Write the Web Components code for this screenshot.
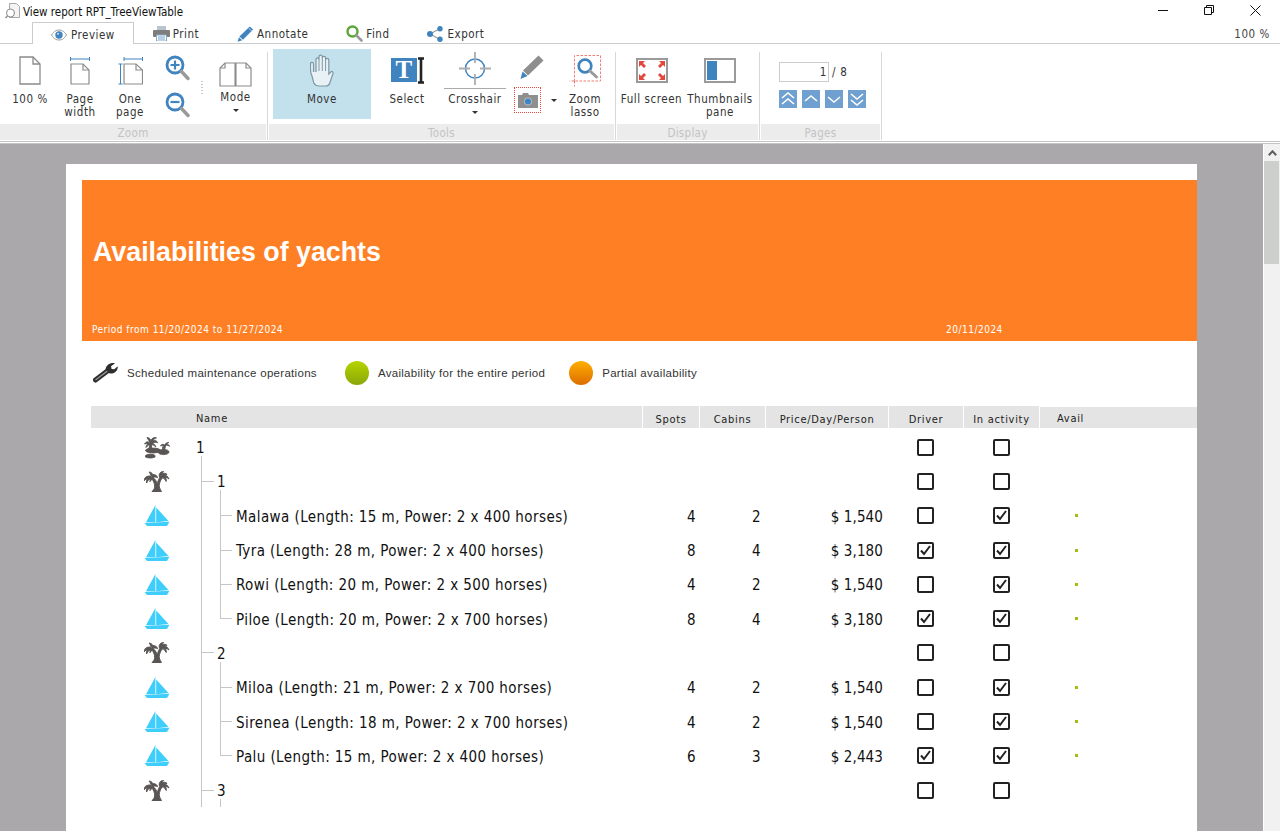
<!DOCTYPE html>
<html lang="en">
<head>
<meta charset="utf-8">
<title>View report RPT_TreeViewTable</title>
<style>
  html, body { margin: 0; height: 100%; overflow: hidden; background: #fff; }
  body { font-family: "DejaVu Sans Condensed", "DejaVu Sans", sans-serif; font-size: 11.5px; color: #333; }
  viewer-app { --ui-font: "DejaVu Sans Condensed", "DejaVu Sans", sans-serif; }
</style>
</head>
<body>
<viewer-app>
  <title-bar slot="title" caption="View report RPT_TreeViewTable"></title-bar>
  <ribbon-tabs slot="tabs"></ribbon-tabs>
  <ribbon-bar slot="ribbon">
    <ribbon-group label="Zoom" width="267" pad="5">
      <ribbon-button icon="page" width="50">100 %</ribbon-button>
      <ribbon-button icon="pageWidth" width="50">Page<br>width</ribbon-button>
      <ribbon-button icon="onePage" width="50">One<br>page</ribbon-button>
      <icon-stack width="44" gap="11" top="6"><svg-icon name="zoomIn"></svg-icon><svg-icon name="zoomOut"></svg-icon></icon-stack>
      <dot-grip></dot-grip>
      <ribbon-button icon="book" width="61" arrow tight>Mode</ribbon-button>
    </ribbon-group>
    <ribbon-group label="Tools" width="346" pad="4">
      <ribbon-button icon="hand" width="98" active>Move</ribbon-button>
      <ribbon-button icon="select" width="72">Select</ribbon-button>
      <ribbon-button icon="crosshair" width="64" arrow rule>Crosshair</ribbon-button>
      <capture-tools></capture-tools>
      <ribbon-button icon="lasso" width="56">Zoom<br>lasso</ribbon-button>
    </ribbon-group>
    <ribbon-group label="Display" width="142" pad="0">
      <ribbon-button icon="fullscreen" width="69">Full screen</ribbon-button>
      <ribbon-button icon="thumbs" width="68">Thumbnails<br>pane</ribbon-button>
    </ribbon-group>
    <ribbon-group label="Pages" width="120" pad="18">
      <page-nav page="1" total="8"></page-nav>
    </ribbon-group>
  </ribbon-bar>
  <report-viewport slot="view">
    <report-page>
      <report-band title="Availabilities of yachts" period="Period from 11/20/2024 to 11/27/2024" date="20/11/2024"></report-band>
      <report-legend></report-legend>
      <tree-table>
        <tree-row level="0" icon="islands" name="1" driver="0" active="0" trunk="below"></tree-row>
        <tree-row level="1" icon="palm" name="1" driver="0" active="0" trunk="full" branch="below"></tree-row>
        <tree-row level="2" icon="boat" name="Malawa (Length: 15 m, Power: 2 x 400 horses)" spots="4" cabins="2" price="$ 1,540" driver="0" active="1" avail trunk="full" branch="full"></tree-row>
        <tree-row level="2" icon="boat" name="Tyra (Length: 28 m, Power: 2 x 400 horses)" spots="8" cabins="4" price="$ 3,180" driver="1" active="1" avail trunk="full" branch="full"></tree-row>
        <tree-row level="2" icon="boat" name="Rowi (Length: 20 m, Power: 2 x 500 horses)" spots="4" cabins="2" price="$ 1,540" driver="0" active="1" avail trunk="full" branch="full"></tree-row>
        <tree-row level="2" icon="boat" name="Piloe (Length: 20 m, Power: 2 x 700 horses)" spots="8" cabins="4" price="$ 3,180" driver="1" active="1" avail trunk="full" branch="end"></tree-row>
        <tree-row level="1" icon="palm" name="2" driver="0" active="0" trunk="full" branch="below"></tree-row>
        <tree-row level="2" icon="boat" name="Miloa (Length: 21 m, Power: 2 x 700 horses)" spots="4" cabins="2" price="$ 1,540" driver="0" active="1" avail trunk="full" branch="full"></tree-row>
        <tree-row level="2" icon="boat" name="Sirenea (Length: 18 m, Power: 2 x 700 horses)" spots="4" cabins="2" price="$ 1,540" driver="0" active="1" avail trunk="full" branch="full"></tree-row>
        <tree-row level="2" icon="boat" name="Palu (Length: 15 m, Power: 2 x 400 horses)" spots="6" cabins="3" price="$ 2,443" driver="1" active="1" avail trunk="full" branch="end"></tree-row>
        <tree-row level="1" icon="palm" name="3" driver="0" active="0" trunk="full" branch="below"></tree-row>
      </tree-table>
    </report-page>
  </report-viewport>
</viewer-app>

<script>
const ICONS = {
  doc: `<svg width="16" height="16" viewBox="0 0 16 16"><path d="M4.500.5h7l3 3v11h-10z" fill="#f4f4f4" stroke="#a8a8a8"/><circle cx="5.500" cy="10" r="4" fill="#fff" stroke="#8a8a8a"/><path d="M2.500 13l-2 2" stroke="#8a8a8a" stroke-width="1.500"/></svg>`,
  eye: `<svg width="16" height="12" viewBox="0 0 16 12"><path d="M.5 6C3 2 5.500 1 8 1s5 1 7.500 5c-2.500 4-5 5-7.500 5S3 10 .5 6z" fill="#fff" stroke="#9a9a9a"/><circle cx="8" cy="6" r="3.700" fill="#3f83bf"/><circle cx="7" cy="4.800" r="1" fill="#cfe2f2"/></svg>`,
  print: `<svg width="17" height="15" viewBox="0 0 17 15"><path d="M4 0h9v4H4z" fill="#b9c4cd"/><rect x="0" y="4" width="17" height="7" rx="1" fill="#7d7d7d"/><path d="M3.500 9h10v6h-10z" fill="#fff" stroke="#8aa9c5"/><path d="M5 11h7M5 13h7" stroke="#6fa0cf"/></svg>`,
  pen: `<svg width="17" height="16" viewBox="0 0 17 16"><path d="M12.800.6l3.300 3L6 13.700l-3.600-3.200z" fill="#3f83bf"/><path d="M2 11.200l3.200 3-4.700 1.500z" fill="#3f83bf"/><path d="M11.500 2l3.300 3" stroke="#a9cbe6"/></svg>`,
  find: `<svg width="17" height="17" viewBox="0 0 17 17"><circle cx="6.500" cy="6.500" r="5" fill="#fff" stroke="#5ea63a" stroke-width="2.400"/><path d="M10.500 10.500l5 5" stroke="#9a9a9a" stroke-width="2.600" stroke-linecap="round"/></svg>`,
  share: `<svg width="16" height="16" viewBox="0 0 16 16"><path d="M3 8l10-5.500M3 8l10 5.500" stroke="#9c9c9c" stroke-width="1.200"/><circle cx="3" cy="8" r="3" fill="#3f83bf"/><circle cx="13" cy="2.800" r="2.700" fill="#3f83bf"/><circle cx="13" cy="13.200" r="2.700" fill="#3f83bf"/></svg>`,
  page: `<svg width="22" height="29" viewBox="0 0 22 29"><path d="M1 1h13l7 7v20H1z" fill="#fff" stroke="#8b8b8b" stroke-width="1.300"/><path d="M14 1v7h7" fill="none" stroke="#8b8b8b" stroke-width="1.300"/></svg>`,
  pageWidth: `<svg width="20" height="29" viewBox="0 0 20 29"><path d="M.5 1v4M19.500 1v4M.5 3h19" stroke="#3f83bf" fill="none"/><path d="M1 8h12l6 6v14H1z" fill="#fff" stroke="#8b8b8b" stroke-width="1.200"/><path d="M13 8v6h6" fill="none" stroke="#8b8b8b" stroke-width="1.200"/></svg>`,
  onePage: `<svg width="25" height="29" viewBox="0 0 25 29"><path d="M6 1v4M24.500 1v4M6 3h18.500M.5 8h4M.5 28h4M2.500 8v20" stroke="#3f83bf" fill="none"/><path d="M6 8h12l6.500 6v14H6z" fill="#fff" stroke="#8b8b8b" stroke-width="1.200"/><path d="M18 8v6h6.500" fill="none" stroke="#8b8b8b" stroke-width="1.200"/></svg>`,
  zoomIn: `<svg width="25" height="26" viewBox="0 0 25 26"><circle cx="10" cy="10" r="8" fill="#fff" stroke="#3f83bf" stroke-width="2.800"/><path d="M5.500 10h9M10 5.500v9" stroke="#3f83bf" stroke-width="2.200"/><path d="M16.500 16.500l6.500 7" stroke="#9a9a9a" stroke-width="3.400" stroke-linecap="round"/></svg>`,
  zoomOut: `<svg width="25" height="26" viewBox="0 0 25 26"><circle cx="10" cy="10" r="8" fill="#fff" stroke="#3f83bf" stroke-width="2.800"/><path d="M5.500 10h9" stroke="#3f83bf" stroke-width="2.200"/><path d="M16.500 16.500l6.500 7" stroke="#9a9a9a" stroke-width="3.400" stroke-linecap="round"/></svg>`,
  book: `<svg width="33" height="25" viewBox="0 0 33 25"><path d="M16.500 1H6L1 6v18h15.500zM16.500 1H27l5 5v18H16.500z" fill="#fff" stroke="#8b8b8b" stroke-width="1.200"/><path d="M6 1v5H1M27 1v5h5" fill="none" stroke="#8b8b8b" stroke-width="1.200"/><path d="M16.500 1v23" stroke="#8b8b8b" stroke-width="2"/></svg>`,
  hand: `<svg width="24" height="33" viewBox="0 0 24 33"><path d="M6 18V5.500c0-2.200 3-2.200 3 0V3c0-2.400 3.300-2.400 3.300 0v1c0-2.300 3.300-2.300 3.300 0v2c0-2.200 3.200-2.200 3.200 0v14l2-2c1.500-1.300 3 .3 2 2l-3 9c-.6 2-2 3-4 3h-7c-2.500 0-3.800-.9-5-3L2 22c-.8-1.700-1.500-3.500-1.500-6.500V10c0-2.300 3-2.300 3 0v8" fill="#e8f2f5" stroke="#7f97a5" stroke-width="1.200"/><path d="M9 5v12M12.300 4v13M15.600 5v12" stroke="#7f97a5"/></svg>`,
  select: `<svg width="33" height="27" viewBox="0 0 33 27"><rect x="0" y="1" width="26" height="24" fill="#3f83bf"/><text x="13" y="21" font-family="Liberation Serif, serif" font-size="25" font-weight="700" fill="#fff" text-anchor="middle">T</text><path d="M27 1.500h6M27 25.500h6M30 1.500v24" stroke="#222" stroke-width="2.600" fill="none"/></svg>`,
  crosshair: `<svg width="32" height="33" viewBox="0 0 32 33"><circle cx="16" cy="16.500" r="9.500" fill="none" stroke="#3f83bf" stroke-width="1.500"/><path d="M16 0v11M16 22v11M0 16.500h11M21 16.500h11" stroke="#adadad" stroke-width="1.800"/></svg>`,
  pencil: `<svg width="24" height="25" viewBox="0 0 24 25"><path d="M18.500.5l5 5L8 20.500l-5-5z" fill="#8e8e8e"/><path d="M2.500 16.500l5 4.500L.5 24z" fill="#3f83bf"/></svg>`,
  camera: `<svg width="20" height="15" viewBox="0 0 20 15"><path d="M0 2h4l1-2h5l1 2h9v13H0z" fill="#8f8f8f"/><circle cx="10" cy="8.500" r="3.600" fill="#3f83bf" stroke="#e7e7e7" stroke-width=".6"/></svg>`,
  lasso: `<svg width="32" height="32" viewBox="0 0 32 32"><path d="M5.500 26.500V.5h26v25.500H.5M5.500 26v5.500" fill="#fff" stroke="#ee7d74" stroke-dasharray="2.500 1.500"/><circle cx="16" cy="11" r="6.300" fill="#fff" stroke="#3f83bf" stroke-width="2.700"/><path d="M21 16l6.500 6" stroke="#9a9a9a" stroke-width="3" stroke-linecap="round"/></svg>`,
  fullscreen: `<svg width="32" height="25" viewBox="0 0 32 25"><rect x="1" y="1" width="30" height="23" fill="#fff" stroke="#9a9a9a" stroke-width="2"/><g fill="#e4473c"><path d="M3 3h6L7 5l3 3-2 2-3-3-2 2zM29 3h-6l2 2-3 3 2 2 3-3 2 2zM3 22h6l-2-2 3-3-2-2-3 3-2-2zM29 22h-6l2-2-3-3 2-2 3 3 2-2z"/></g></svg>`,
  thumbs: `<svg width="32" height="25" viewBox="0 0 32 25"><rect x="1" y="1" width="30" height="23" fill="#fff" stroke="#9a9a9a" stroke-width="2"/><rect x="3" y="3" width="10" height="19" fill="#3f83bf"/></svg>`,
  wrench: `<svg width="25" height="21" viewBox="0 0 25 21"><path d="M2.500 18L15 8.500" stroke="#2e2e2e" stroke-width="5" stroke-linecap="round"/><path d="M2.500 18L15 8.500" stroke="#9a9a9a" stroke-width="1.200"/><path d="M12.500 7.500C13 3 17.500.2 22 1.300l-4 3 .6 2.600 2.700.4 3.400-3.100c.5 4.300-3.200 8-8 7.200z" fill="#2e2e2e"/></svg>`,
  islands: `<svg width="26" height="23" viewBox="0 0 26 23" fill="#595555" stroke="#595555" stroke-width=".9" stroke-linejoin="round"><path d="M6 8l1.800 0-.6 6h-2.600z"/><path d="M6.500 8C4.500 5 2.500 5 .5 8c1.500-.6 2.500-.6 3.500-.4C2.500 9 2 10.300 2 11.500 3.500 9.500 5 8.700 6.500 8zM6.500 8C5.500 5 4 3.500 3 1.500c2 0 3.500 1.500 4 3C8 2 10 1 12.500 2c-1.500.3-3 1-3.700 2.300 2-.5 4 .3 5 2.500C12 5.700 10 6.200 8.600 7.400c1.400.4 2.800 1.700 3.200 3.500C10 9.300 8.500 8.500 6.500 8z"/><ellipse cx="9" cy="14.500" rx="7.500" ry="2.400"/><ellipse cx="19.500" cy="16" rx="5.500" ry="2.600"/><path d="M19.300 14l1-5 1.300.2-1 5z"/><path d="M20.800 9.200c-1.800-1.400-3.300-1-4.300.6 1.300-.4 2.300-.2 3 .2-1 1-1.100 1.800-.9 2.800.8-1.700 1.500-2.500 2.200-3.600zM20.800 9.200c.8-2 2-3 4-2.700-1 .4-1.800 1-2.200 2 1.400-.2 2.600.4 3 1.800-1.500-1-3-1.300-4.800-1.100z"/><path d="M1.500 19.500c2-1.800 7.500-1.800 9.500 0v1.500c-2.500 1.300-7 1.300-9.500 0z"/></svg>`,
  palm: `<svg width="26" height="21" viewBox="0 0 26 21" fill="#595555" stroke="#595555" stroke-width="1" stroke-linejoin="round"><path d="M8 20.500h9.500c-.8-1.500-1.800-2.800-2.200-4.500-.4-2 .4-5 2.200-8.500l-2-.6c-1.400 2.500-2 4.600-2.300 6.300C12.700 10.500 11.200 8 9 6.500L7.500 7.800c2 2 3.200 4.600 3.200 8 0 2-1.500 3.300-2.700 4.700z"/><path d="M8.500 7C7 4.700 4.500 4.400 2 6c-1.300.9-1.800 2-2 3.800C1.200 8.500 2.300 7.900 3.300 7.700 2.500 9 2.200 10.300 2.600 12c.9-2 2.100-3.300 3.500-4.300.1 1 .1 1.800-.2 3C7 9.600 7.800 8.300 8.500 7zM8.500 7c1.400-1.300 3.200-1.400 5.100-.3C13 4.600 11.300 3.300 9 3.700c-.5-1.300-2-2.500-4-2.700 1 1.100 1.400 2 1.500 3C7.500 4.800 8 5.800 8.500 7zM16.500 7.500c-1.600-1.800-1.700-3.500-.7-5.200.7-1.100 1.800-1.800 3.800-1.800-.8.800-1.300 1.600-1.500 2.500 1.600-1 3.200-1 5 .4-1.400 0-2.500.3-3.300 1 2-.3 4 .7 5.200 3.600-1.400-1.200-2.700-1.800-4-1.900 1.100 1.300 1.500 2.700 1.200 4.400-.8-1.700-1.900-3-3.400-3.900-.3 1-1.100 1.700-2.300.9z"/></svg>`,
  boat: `<svg width="26" height="21" viewBox="0 0 26 21" fill="#3fcdfb"><path d="M11.400 0v17.300H2zM12.200 2.500L24.500 16l-12.300 1.200z"/><path d="M.5 18l25-1.200-2.500 4.200H3z"/></svg>`
};

function defineShadow(name, css, html) {
  customElements.define(name, class extends HTMLElement {
    constructor() {
      super();
      this.attachShadow({ mode: "open" });
    }
    connectedCallback() {
      this.shadowRoot.innerHTML = `<style>${css(this)}</style>${html(this)}`;
    }
  });
}

const attr = (el, name, fallback = "") => el.hasAttribute(name) ? el.getAttribute(name) : fallback;

defineShadow("viewer-app", () => `
  :host { display: flex; flex-direction: column; width: 1280px; height: 831px; overflow: hidden; background: #fff; }
`, () => `<slot name="title"></slot><slot name="tabs"></slot><slot name="ribbon"></slot><slot name="view"></slot>`);

defineShadow("svg-icon", () => `
  :host { display: block; line-height: 0; }
`, (el) => ICONS[attr(el, "name")] || "");

defineShadow("title-bar", () => `
  :host { display: flex; align-items: center; height: 22px; padding-left: 5px; font: 11.5px var(--ui-font); color: #111; }
  span { margin-left: 2px; flex: 1; padding-top: 2px; }
  .win { display: flex; align-items: center; justify-content: center; width: 46px; height: 22px; box-sizing: border-box; padding-bottom: 2px; }
`, (el) => `
  <svg-icon name="doc"></svg-icon><span>${attr(el, "caption")}</span>
  <div class="win"><svg width="10" height="10"><path d="M0 5.500h10" stroke="#111"/></svg></div>
  <div class="win"><svg width="10" height="10"><path d="M.5 2.500h7v7h-7zM2.500 2.500v-2h7v7h-2" fill="none" stroke="#111"/></svg></div>
  <div class="win" style="margin-right:2px"><svg width="11" height="11"><path d="M.5.500l10 10M10.500.500l-10 10" stroke="#111"/></svg></div>`);

defineShadow("ribbon-tabs", () => `
  :host { display: flex; height: 21px; padding-left: 32px; padding-right: 10px; border-bottom: 1px solid #ccc; font: 11.5px var(--ui-font); letter-spacing: .5px; color: #333; }
  .tab { display: flex; align-items: center; gap: 4px; padding: 2px 19px 0; height: 21px; box-sizing: border-box; }
  .tab svg-icon { width: 16px; }
  .on { border: 1px solid #ccc; border-bottom: 0; height: 22px; background: #fff; padding: 2px 18px 0; }
  .zoom { margin-left: auto; align-self: center; padding-top: 2px; letter-spacing: .58px; color: #444; }
`, () => `
  <div class="tab on"><svg-icon name="eye"></svg-icon>Preview</div>
  <div class="tab"><svg-icon name="print"></svg-icon>Print</div>
  <div class="tab"><svg-icon name="pen"></svg-icon>Annotate</div>
  <div class="tab"><svg-icon name="find"></svg-icon>Find</div>
  <div class="tab"><svg-icon name="share"></svg-icon>Export</div>
  <div class="zoom">100 %</div>`);

defineShadow("ribbon-bar", () => `
  :host { display: flex; height: 100px; box-sizing: border-box; border-bottom: 3px double #c4c4c4; font: 11.5px/13px var(--ui-font); letter-spacing: .55px; color: #333; }
`, () => `<slot></slot>`);

defineShadow("ribbon-group", (el) => `
  :host { display: flex; flex-direction: column; flex: none; box-sizing: border-box; width: ${attr(el, "width")}px; margin-right: 2px; padding-top: 8px; }
  .wrap { border-right: 1px solid #d8d8d8; margin-right: -1px; }
  .body { display: flex; height: 75px; margin-top: -3px; padding-left: ${attr(el, "pad", 0)}px; }
  .label { height: 16px; margin-right: 1px; background: #ececec; color: #c3c3c3; text-align: center; line-height: 18px; letter-spacing: .3px; }
`, (el) => `
  <div class="wrap"><div class="body"><slot></slot></div>
  <div class="label">${attr(el, "label")}</div></div>`);

defineShadow("ribbon-button", (el) => `
  :host { display: flex; flex-direction: column; align-items: center; flex: none; box-sizing: border-box; width: ${attr(el, "width")}px; height: 70px; text-align: center; white-space: nowrap; ${el.hasAttribute("active") ? "background:#c2e1ed;" : ""} }
  .ic { display: flex; align-items: center; justify-content: center; height: 43px; flex: none; box-sizing: border-box; ${el.hasAttribute("rule") ? "width:62px;border-bottom:1px solid #aaa;height:40px;" : ""} ${el.hasAttribute("tight") ? "height:41px;padding-top:9px;" : ""} }
  .tx { margin-top: ${el.hasAttribute("rule") ? 4 : 1}px; }
  .ar { width: 0; height: 0; border: 3px solid transparent; border-top: 3px solid #333; border-bottom: 0; margin-top: 5px; }
`, (el) => `
  <div class="ic"><svg-icon name="${attr(el, "icon")}"></svg-icon></div>
  <div class="tx"><slot></slot></div>
  ${el.hasAttribute("arrow") ? `<div class="ar"></div>` : ""}`);

defineShadow("icon-stack", (el) => `
  :host { display: flex; flex-direction: column; align-items: center; flex: none; width: ${attr(el, "width")}px; padding-top: ${attr(el, "top", 0)}px; gap: ${attr(el, "gap", 0)}px; box-sizing: border-box; }
`, () => `<slot></slot>`);

defineShadow("dot-grip", () => `
  :host { display: block; flex: none; width: 2px; height: 14px; margin: 32px 2px 0; background: repeating-linear-gradient(#c9c9c9 0 1px, transparent 1px 3px); }
`, () => ``);

defineShadow("capture-tools", () => `
  :host { display: flex; flex-direction: column; flex: none; width: 50px; box-sizing: border-box; padding-top: 6px; }
  .pen { display: flex; justify-content: center; height: 25px; }
  .row { display: flex; align-items: center; margin-top: 7px; padding-left: 7px; gap: 10px; }
  .cam { display: flex; align-items: center; justify-content: center; width: 28px; height: 26px; box-sizing: border-box; border: 1px dotted #e4473c; }
  .ar { width: 0; height: 0; border: 3px solid transparent; border-top: 3px solid #333; border-bottom: 0; }
`, () => `
  <div class="pen"><svg-icon name="pencil"></svg-icon></div>
  <div class="row"><div class="cam"><svg-icon name="camera"></svg-icon></div><div class="ar"></div></div>`);

defineShadow("page-nav", () => `
  :host { display: flex; flex-direction: column; gap: 8px; padding-top: 13px; font: 11.5px var(--ui-font); letter-spacing: .7px; color: #333; }
  .pg { display: flex; align-items: center; gap: 3px; height: 20px; }
  .in { width: 50px; height: 20px; box-sizing: border-box; border: 1px solid #ccc; text-align: right; padding-right: 1px; line-height: 18px; }
  .btns { display: flex; gap: 5px; }
  .btn { width: 18px; height: 18px; background: #6fa0cf; }
  svg { display: block; }
`, (el) => {
  const chev = (ds) => `<div class="btn"><svg width="18" height="18"><path d="${ds}" fill="none" stroke="#fff" stroke-width="1.600"/></svg></div>`;
  return `
  <div class="pg"><div class="in">${attr(el, "page")}</div><div>/ ${attr(el, "total")}</div></div>
  <div class="btns">
    ${chev("M3 8l6-5 6 5M3 14l6-5 6 5")}
    ${chev("M3 11l6-5 6 5")}
    ${chev("M3 7l6 5 6-5")}
    ${chev("M3 4l6 5 6-5M3 10l6 5 6-5")}
  </div>`;
});

defineShadow("report-viewport", () => `
  :host { display: flex; flex: 1; min-height: 0; background: #aaa8ab; overflow: hidden; }
  .view { flex: 1; min-width: 0; padding: 20px 0 0 66px; overflow: hidden; }
  .sb { display: flex; flex-direction: column; flex: none; width: 17px; box-sizing: border-box; border-left: 1px solid #fff; background: #f1f1f1; }
  .up { display: flex; justify-content: center; align-items: center; height: 17px; }
  .th { height: 103px; margin: 0 1px 0 0; background: #cdcfcd; }
`, () => `
  <div class="view"><slot></slot></div>
  <div class="sb"><div class="up"><svg width="9" height="6"><path d="M.8 5.200L4.500 1.200l3.700 4" fill="none" stroke="#606060" stroke-width="2"/></svg></div><div class="th"></div></div>`);

defineShadow("report-page", () => `
  :host { display: block; width: 1131px; height: 900px; box-sizing: border-box; background: #fff; padding: 16px 0 0 16px; }
`, () => `<slot></slot>`);

defineShadow("report-band", () => `
  :host { display: flex; flex-direction: column; height: 161px; box-sizing: border-box; background: #ff7f24; color: #fff; padding-left: 11px; }
  h1 { margin: 56px 0 0; font: 700 26.8px/33px "Liberation Sans", sans-serif; flex: 1; }
  .foot { display: flex; height: 24px; font: 10px/26px var(--ui-font); letter-spacing: .5px; margin-left: -1px; }
  .foot span { width: 854px; }
`, (el) => `
  <h1>${attr(el, "title")}</h1>
  <div class="foot"><span>${attr(el, "period")}</span><div>${attr(el, "date")}</div></div>`);

defineShadow("report-legend", () => `
  :host { display: flex; align-items: center; height: 65px; box-sizing: border-box; padding: 0 0 2px 11px; font: 11.5px "Liberation Sans", sans-serif; letter-spacing: .3px; color: #333; }
  .ball { width: 24px; height: 24px; border-radius: 50%; flex: none; }
  .g { background: linear-gradient(#b6d400, #8aa60a); margin: 0 9px 0 28px; }
  .o { background: linear-gradient(#ffae00, #dd6d00); margin: 0 9px 0 24px; }
  .w { margin-right: 9px; }
`, () => `
  <svg-icon class="w" name="wrench"></svg-icon><span>Scheduled maintenance operations</span>
  <div class="ball g"></div><span>Availability for the entire period</span>
  <div class="ball o"></div><span>Partial availability</span>`);

const COLS = "552px 57px 66px 123px 75px 76px 157px";

defineShadow("tree-table", () => `
  :host { display: block; margin-left: 9px; width: 1106px; --cols: 105px 447px 57px 66px 123px 75px 76px 157px; }
  .head { display: grid; grid-template-columns: ${COLS}; grid-template-rows: 22px; height: 22px; margin-bottom: 2px; font: 11px/27px var(--ui-font); letter-spacing: .7px; color: #222; text-align: center; }
  .head div { background: #e3e4e3; border-right: 1px solid #fff; }
  .head .name { text-align: left; padding-left: 105px; line-height: 25px; }
  .head .avail { text-align: left; padding-left: 17px; border: 0; margin-top: 1px; line-height: 23px; }
`, () => `
  <div class="head">
    <div class="name">Name</div><div>Spots</div><div>Cabins</div><div>Price/Day/Person</div><div>Driver</div><div>In activity</div><div class="avail">Avail</div>
  </div>
  <slot></slot>`);

defineShadow("check-box", () => `
  :host { display: block; width: 17px; height: 17px; box-sizing: border-box; border: 2px solid #222; border-radius: 2px; background: #fff; line-height: 0; }
`, (el) => el.hasAttribute("on") ? `<svg width="13" height="13" viewBox="0 0 13 13"><path d="M2 6.500l3 3.500 6-8" fill="none" stroke="#222" stroke-width="2"/></svg>` : "");

// tree connector lines are painted as backgrounds of the name cell
function connectors(el) {
  const level = +attr(el, "level");
  const line = "#c6c6c6";
  const seg = (x, y, w, h) => `linear-gradient(${line},${line}) ${x}px ${y} / ${w} ${h} no-repeat`;
  const parts = [];
  const trunk = attr(el, "trunk");
  if (trunk === "below") parts.push(seg(5, "26px", "1px", "calc(100% - 26px)"));
  if (trunk === "full") parts.push(seg(5, "0", "1px", "100%"));
  const branch = attr(el, "branch");
  if (branch === "below") parts.push(seg(24, "26px", "1px", "calc(100% - 26px)"));
  if (branch === "full") parts.push(seg(24, "0", "1px", "100%"));
  if (branch === "end") parts.push(seg(24, "0", "1px", "50%"));
  if (level === 1) parts.push(seg(5, "50%", "13px", "1px"));
  if (level === 2) parts.push(seg(24, "50%", "12px", "1px"));
  return parts.join(",") || "none";
}

defineShadow("tree-row", (el) => `
  :host { display: grid; grid-template-columns: var(--cols); align-items: center; height: 34.3px; font: 15px "DejaVu Sans Condensed", "DejaVu Sans", sans-serif; letter-spacing: .42px; color: #111; }
  .ic { display: flex; justify-content: flex-end; padding-right: 26px; }
  .nm { align-self: stretch; display: flex; align-items: center; box-sizing: border-box; white-space: nowrap; padding-top: 2px; padding-left: ${[0, 21, 40][+attr(el, "level")]}px; background: ${connectors(el)}; }
  .num { text-align: right; padding: 2px 4px 0 0; }
  .num.c { padding-right: 5px; }
  .pr { text-align: right; padding: 2px 6px 0 0; letter-spacing: .1px; }
  .ck { display: flex; justify-content: center; padding-right: 2px; }
  .av { display: flex; padding-left: 35px; }
  .dot { width: 3px; height: 3px; background: #a3bd10; }
`, (el) => `
  <div class="ic"><svg-icon name="${attr(el, "icon")}"></svg-icon></div>
  <div class="nm">${attr(el, "name")}</div>
  <div class="num">${attr(el, "spots")}</div>
  <div class="num c">${attr(el, "cabins")}</div>
  <div class="pr">${attr(el, "price")}</div>
  <div class="ck"><check-box ${attr(el, "driver") === "1" ? "on" : ""}></check-box></div>
  <div class="ck"><check-box ${attr(el, "active") === "1" ? "on" : ""}></check-box></div>
  <div class="av">${el.hasAttribute("avail") ? `<div class="dot"></div>` : ""}</div>`);
</script>
</body>
</html>
